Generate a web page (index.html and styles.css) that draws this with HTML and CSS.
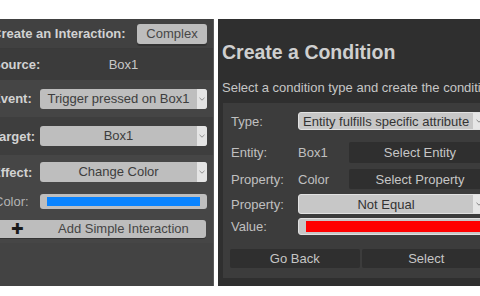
FILE: index.html
```html
<!DOCTYPE html>
<html>
<head>
<meta charset="utf-8">
<link rel="stylesheet" href="styles.css">
</head>
<body>
<div class="stage">
  <section class="interaction">
    <div class="row row-head">
      <span class="label">Create an Interaction:</span>
      <span class="btn-light complex">Complex</span>
    </div>
    <div class="row row-source">
      <span class="label">Source:</span>
      <span class="value">Box1</span>
    </div>
    <div class="row row-event">
      <span class="label">Event:</span>
      <div class="select"><span class="select-text">Trigger pressed on Box1</span><span class="arrow"><svg width="6" height="4" viewBox="0 0 6 4"><path d="M0.5 0.8 L3 3.2 L5.5 0.8" fill="none" stroke="#888" stroke-width="0.9"/></svg></span></div>
    </div>
    <div class="row row-target">
      <span class="label">Target:</span>
      <div class="select"><span class="select-text">Box1</span><span class="arrow"><svg width="6" height="4" viewBox="0 0 6 4"><path d="M0.5 0.8 L3 3.2 L5.5 0.8" fill="none" stroke="#888" stroke-width="0.9"/></svg></span></div>
    </div>
    <div class="row row-effect">
      <span class="label">Effect:</span>
      <div class="select"><span class="select-text">Change Color</span><span class="arrow"><svg width="6" height="4" viewBox="0 0 6 4"><path d="M0.5 0.8 L3 3.2 L5.5 0.8" fill="none" stroke="#888" stroke-width="0.9"/></svg></span></div>
    </div>
    <div class="row row-color">
      <span class="label label-plain">Color:</span>
      <div class="color-input"><span class="swatch swatch-blue"></span></div>
    </div>
    <div class="row-add">
      <div class="btn-light add-btn">
        <span class="plus">✚</span>
        <span class="add-text">Add Simple Interaction</span>
      </div>
    </div>
  </section>

  <section class="condition">
    <h1 class="title">Create a Condition</h1>
    <p class="subtitle">Select a condition type and create the condition</p>
    <div class="box">
      <div class="crow crow-type">
        <span class="clabel">Type:</span>
        <div class="cselect"><span class="cselect-text left">Entity fulfills specific attribute</span><span class="carrow wide"><svg width="6" height="4" viewBox="0 0 6 4"><path d="M0.5 0.8 L3 3.2 L5.5 0.8" fill="none" stroke="#777" stroke-width="0.9"/></svg></span></div>
      </div>
      <div class="crow crow-entity">
        <span class="clabel">Entity:</span>
        <span class="cval">Box1</span>
        <span class="btn-dark">Select Entity</span>
      </div>
      <div class="crow crow-prop">
        <span class="clabel">Property:</span>
        <span class="cval">Color</span>
        <span class="btn-dark">Select Property</span>
      </div>
      <div class="crow crow-op">
        <span class="clabel">Property:</span>
        <div class="cselect op"><span class="cselect-text">Not Equal</span><span class="carrow wide"><svg width="6" height="4" viewBox="0 0 6 4"><path d="M0.5 0.8 L3 3.2 L5.5 0.8" fill="none" stroke="#777" stroke-width="0.9"/></svg></span></div>
      </div>
      <div class="crow crow-value">
        <span class="clabel">Value:</span>
        <div class="cvalue-input"><span class="swatch swatch-red"></span></div>
      </div>
      <div class="actions">
        <span class="btn-dark action">Go Back</span>
        <span class="btn-dark action">Select</span>
      </div>
    </div>
  </section>
</div>
</body>
</html>
```

FILE: styles.css
```css
html, body {
  margin: 0;
  padding: 0;
  background: #ffffff;
  width: 480px;
  height: 296px;
  overflow: hidden;
  font-family: "Liberation Sans", Arial, sans-serif;
  font-size: 13px;
}

.stage {
  display: flex;
  align-items: flex-start;
  padding-top: 19px;
  gap: 4px;
}

/* ---------- left panel ---------- */
.interaction {
  flex: none;
  width: 227px;
  height: 267px;
  margin-left: -13px;
  background: #434343;
  display: flex;
  flex-direction: column;
  border-right: 1px solid #5a5a5a;
  box-sizing: border-box;
}

.row {
  display: grid;
  grid-template-columns: 48px 1fr;
  align-items: center;
  padding: 0 6px 0 5px;
}

.row-head {
  height: 30px;
  background: #414141;
  grid-template-columns: 1fr 70px;
  border-bottom: 1px solid #3a3a3a;
  box-sizing: border-box;
}
.row-source { height: 31px; background: #3b3b3b; }
.row-event { height: 37px; background: #454545; }
.row-target { height: 38px; background: #3e3e3e; }
.row-effect { height: 34px; background: #464646; }
.row-color { height: 24px; background: #464646; }

.label {
  color: #d2d2d2;
  font-weight: bold;
  white-space: nowrap;
}
.label-plain {
  font-weight: normal;
  color: #b4b4b4;
  margin-left: 2px;
}
.value {
  color: #c8c8c8;
  text-align: center;
}

.btn-light {
  background: #bdbdbd;
  color: #474747;
  border-radius: 3px;
  box-shadow: 0 2px 0 #333333;
}
.complex {
  height: 20px;
  line-height: 20px;
  text-align: center;
}

.select {
  display: flex;
  height: 20px;
  background: #bebebe;
  border-radius: 3px;
  overflow: hidden;
  color: #3d3d3d;
}
.select-text {
  flex: 1;
  text-align: center;
  line-height: 20px;
  white-space: nowrap;
  overflow: hidden;
}
.arrow {
  flex: none;
  width: 10px;
  background: #e4e4e4;
  display: flex;
  align-items: center;
  justify-content: center;
}

.color-input {
  height: 15px;
  background: #bebebe;
  border-radius: 3px;
  padding: 3px 7px;
  box-sizing: border-box;
  display: flex;
}
.swatch { flex: 1; display: block; }
.swatch-blue { background: #0a84ff; }
.swatch-red { background: #ff0000; }

.row-add {
  height: 30px;
  background: #464646;
  padding: 7px 7px 0 0;
  box-sizing: border-box;
}
.add-btn {
  height: 18px;
  display: flex;
  align-items: center;
  padding-left: 24px;
  box-shadow: 0 1px 0 #333333;
}
.plus {
  color: #1a1a1a;
  font-size: 15px;
  font-family: "DejaVu Sans", sans-serif;
  width: 47px;
  line-height: 18px;
}
.add-text {
  color: #454545;
  line-height: 18px;
}

/* ---------- right panel ---------- */
.condition {
  flex: none;
  width: 285px;
  height: 267px;
  background: #2f2f2f;
  padding: 0 5px 0 4px;
  box-sizing: border-box;
  color: #c6c6c6;
}

.title {
  margin: 0;
  padding: 21px 0 0 0;
  font-size: 19.5px;
  line-height: 24px;
  font-weight: bold;
  color: #cfcfcf;
  white-space: nowrap;
}

.subtitle {
  margin: 16px 0 7px 0;
  line-height: 16px;
  white-space: nowrap;
  color: #c6c6c6;
}

.box {
  background: #3c3c3c;
  margin-left: 1px;
  padding: 9px 7px 10px 7px;
  display: flex;
  flex-direction: column;
}

.crow {
  display: grid;
  grid-template-columns: 68px 51px 1fr;
  align-items: center;
}
.clabel { padding-left: 1px; color: #c0c0c0; }
.cval { color: #c0c0c0; }

.crow-type, .crow-op, .crow-value {
  grid-template-columns: 68px 1fr;
}

.crow-type { height: 18px; }
.crow-entity { height: 21px; margin-top: 12px; }
.crow-prop { height: 20px; margin-top: 6px; }
.crow-op { height: 20px; margin-top: 5px; }
.crow-value { height: 17px; margin-top: 4px; }

.cselect {
  display: flex;
  height: 18px;
  background: #c7c7c7;
  border: 1px solid #e2e2e2;
  border-radius: 3px;
  box-sizing: border-box;
  color: #333333;
  overflow: hidden;
}
.cselect.op { height: 20px; }
.cselect-text {
  flex: 1;
  text-align: center;
  white-space: nowrap;
  overflow: hidden;
  display: flex;
  align-items: center;
  justify-content: center;
}
.cselect-text.left {
  justify-content: flex-start;
  padding-left: 4px;
}
.carrow {
  flex: none;
  width: 12px;
  background: #e6e6e6;
  display: flex;
  align-items: center;
  justify-content: center;
}
.carrow.wide {
  width: 17px;
  justify-content: flex-start;
  padding-left: 3px;
  box-sizing: border-box;
}

.cvalue-input {
  height: 17px;
  background: #c7c7c7;
  border: 1px solid #e0e0e0;
  border-radius: 3px;
  box-sizing: border-box;
  padding: 2px 7px 2px 7px;
  display: flex;
}

.btn-dark {
  background: #2f2f2f;
  color: #c6c6c6;
  border-radius: 2px;
  text-align: center;
  height: 100%;
  display: flex;
  align-items: center;
  justify-content: center;
}

.actions {
  display: grid;
  grid-template-columns: 1fr 1fr;
  gap: 2px;
  height: 19px;
  margin-top: 14px;
}
```
